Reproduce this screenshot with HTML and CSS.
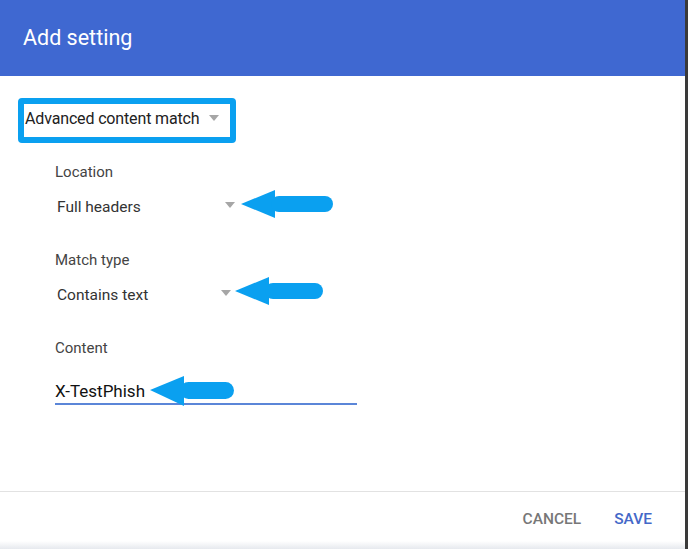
FILE: index.html
```html
<!DOCTYPE html>
<html lang="en">
<head>
    <meta charset="UTF-8">
    <meta name="viewport" content="width=device-width, initial-scale=1.0">
    <title>Add setting</title>
    <link rel="stylesheet" href="styles.css">
</head>
<body>
    <div class="dialog">
        <div class="dialog-header">
            <h2>Add setting</h2>
        </div>

        <div class="dialog-body">
            <div class="highlight">
                <div class="select select-main">
                    <span>Advanced content match</span>
                    <span class="caret"></span>
                </div>
            </div>

            <div class="field">
                <div class="label">Location</div>
                <div class="select select-loc">
                    <span>Full headers</span>
                    <span class="caret"></span>
                </div>
                <svg class="arrow arrow-loc" width="92" height="28" viewBox="0 0 92 28">
                    <polygon points="0,14 34,0 34,28" />
                    <rect x="30" y="6" width="62" height="16" rx="8" />
                </svg>
            </div>

            <div class="field">
                <div class="label">Match type</div>
                <div class="select select-type">
                    <span>Contains text</span>
                    <span class="caret"></span>
                </div>
                <svg class="arrow arrow-type" width="88" height="28" viewBox="0 0 88 28">
                    <polygon points="0,14 34,0 34,28" />
                    <rect x="30" y="6" width="58" height="16" rx="8" />
                </svg>
            </div>

            <div class="field field-content">
                <div class="label">Content</div>
                <div class="text-input">X-TestPhish</div>
                <svg class="arrow arrow-content" width="84" height="30" viewBox="0 0 84 30">
                    <polygon points="0,14 34,0 34,30" />
                    <rect x="30" y="6" width="54" height="17" rx="8.5" />
                </svg>
            </div>
        </div>

        <div class="dialog-footer">
            <button type="button" class="btn btn-cancel">Cancel</button>
            <button type="button" class="btn btn-save">Save</button>
        </div>
    </div>
</body>
</html>
```

FILE: styles.css
```css
html, body {
    height: 100%;
}

body {
    margin: 0;
    background-color: #3a3a3a;
    font-family: Roboto, 'Liberation Sans', Arial, sans-serif;
    color: #212121;
}

.dialog {
    width: 685px;
    height: 549px;
    background-color: white;
    display: flex;
    flex-direction: column;
}

.dialog-header {
    height: 76px;
    background-color: #3f68d1;
    display: flex;
    align-items: center;
    padding-left: 23px;
    box-sizing: border-box;
}

.dialog-header h2 {
    margin: 0 0 2px;
    font-size: 21.5px;
    font-weight: 400;
    color: white;
}

.dialog-body {
    flex: 1;
    padding: 22px 0 0 0;
}

.highlight {
    display: inline-block;
    margin-left: 18px;
    border: 6px solid #0aa0f0;
    border-radius: 4px;
    width: 206px;
    height: 33px;
}

.select {
    display: flex;
    align-items: center;
    justify-content: space-between;
}

.select-main {
    height: 29px;
    padding-left: 1px;
    padding-right: 11px;
    font-size: 16px;
    letter-spacing: -0.15px;
}

.select-main .caret {
    margin-top: -2px;
}

.caret {
    width: 0;
    height: 0;
    border-left: 5.5px solid transparent;
    border-right: 5.5px solid transparent;
    border-top: 6px solid #a6a6a6;
}

.field {
    position: relative;
    margin-left: 55px;
    margin-top: 19px;
}

.field + .field {
    margin-top: 31px;
}

.label {
    font-size: 15px;
    line-height: 20px;
    color: #444;
}

.select-loc,
.select-type {
    margin-top: 13px;
    margin-left: 2px;
    line-height: 24px;
    font-size: 15.5px;
    color: #333;
}

.select-loc {
    width: 178px;
}

.select-type {
    width: 174px;
}

.select-loc .caret,
.select-type .caret {
    margin-top: -5px;
}

.text-input {
    margin-top: 21px;
    width: 302px;
    line-height: 24px;
    font-size: 17px;
    color: #111;
    border-bottom: 2px solid #5b86d8;
}

.arrow {
    position: absolute;
    fill: #0aa0f0;
}

.arrow-loc {
    left: 186px;
    top: 28px;
}

.arrow-type {
    left: 180px;
    top: 27px;
}

.arrow-content {
    left: 95px;
    top: 38px;
}

.dialog-footer {
    height: 58px;
    border-top: 1px solid #e2e2e2;
    display: flex;
    justify-content: flex-end;
    align-items: center;
    gap: 33px;
    padding-right: 33px;
    padding-bottom: 4px;
    box-sizing: border-box;
    background: linear-gradient(to bottom, white 0, white 49px, #e6e9ee 57px);
}

.btn {
    background: none;
    border: none;
    padding: 0;
    font-family: inherit;
    font-size: 15.5px;
    font-weight: 500;
    text-transform: uppercase;
    cursor: pointer;
}

.btn-cancel {
    color: #777;
}

.btn-save {
    color: #4468c8;
}
```
